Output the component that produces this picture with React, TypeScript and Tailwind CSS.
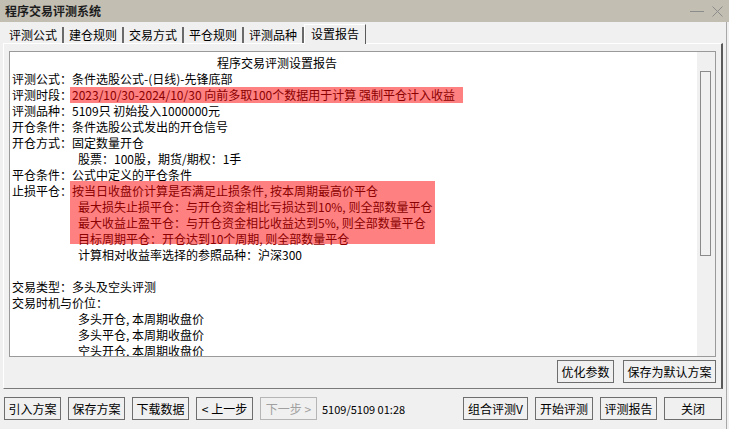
import React from "react";

const tabs = ["评测公式", "建仓规则", "交易方式", "平仓规则", "评测品种", "设置报告"];

const Btn = ({
  label,
  w,
  disabled = false,
}: {
  label: string;
  w: string;
  disabled?: boolean;
}) => (
  <div
    className={`flex h-[23px] items-center justify-center border bg-[#f0f0f0] text-[12px] ${w} ${
      disabled ? "border-[#b5b5b5] text-[#a0a0a0]" : "border-[#6e6e6e] text-black"
    }`}
  >
    {label}
  </div>
);

const Row = ({ children, indent }: { children: React.ReactNode; indent?: boolean }) => (
  <div className={`flex h-[16px] items-center whitespace-pre ${indent ? "pl-[66px]" : ""}`}>
    {children}
  </div>
);

export default function App() {
  return (
    <div className="h-[429px] w-[729px] overflow-hidden bg-[#f0f0f0] font-['Noto_Sans_CJK_SC','Liberation_Sans',sans-serif] text-[12px] leading-[16px] text-black">
      {/* title bar */}
      <div className="flex h-[22px] items-center justify-between bg-[#c2beb2] pl-[5px] pr-[6px]">
        <span className="text-[12px] font-bold text-[#1c1c1c]">程序交易评测系统</span>
        <div className="flex items-center gap-[8px]">
          <svg width="14" height="12" viewBox="0 0 14 12">
            <line x1="0" y1="6.5" x2="14" y2="6.5" stroke="#8c8c8c" strokeWidth="1" />
          </svg>
          <svg width="11" height="11" viewBox="0 0 11 11">
            <path d="M0.5 0.5 L10.5 10.5 M10.5 0.5 L0.5 10.5" stroke="#8c8c8c" strokeWidth="1" />
          </svg>
        </div>
      </div>

      <div className="h-[407px] w-[727px] border-r border-[#a8a8a8]">
        {/* tabs */}
        <div className="flex h-[21px] items-end pl-[4px]">
          {tabs.map((t, i) =>
            i === tabs.length - 1 ? (
              <div
                key={t}
                className="relative z-10 -mb-px flex h-[20px] items-center border-l border-t border-r border-l-white border-t-white border-r-[#5a5a5a] bg-[#f0f0f0] px-[6px] pb-[1px]"
              >
                {t}
              </div>
            ) : (
              <div
                key={t}
                className="flex h-[16px] items-center border-r-2 border-r-[#6a6a6a] px-[5px]"
              >
                {t}
              </div>
            )
          )}
        </div>

        {/* page */}
        <div className="ml-[3px] flex h-[346px] w-[720px] flex-col border-l border-t border-r-2 border-b border-l-white border-t-white border-r-[#5a5a5a] border-b-[#7a7a7a] pl-[5px] pr-[5px] pt-[7px]">
          <div className="flex h-[306px] border border-[#9a9a9a] bg-white">
            <div className="flex-1 overflow-hidden pl-[2px] pt-[3px]">
              <Row>
                <span className="pl-[205px]">程序交易评测设置报告</span>
              </Row>
              <Row>评测公式：条件选股公式-(日线)-先锋底部</Row>
              <Row>
                <span className="w-[58px]">评测时段：</span>
                <span className="bg-[#ff8080] pl-[2px] pr-[8px] text-[#8b0000]">
                  2023/10/30-2024/10/30 向前多取100个数据用于计算 强制平仓计入收益
                </span>
              </Row>
              <Row>评测品种：5109只 初始投入1000000元</Row>
              <Row>开仓条件：条件选股公式发出的开仓信号</Row>
              <Row>开仓方式：固定数量开仓</Row>
              <Row indent>股票：100股，期货/期权：1手</Row>
              <Row>平仓条件：公式中定义的平仓条件</Row>
              <div className="flex">
                <span className="h-[16px] w-[58px] whitespace-pre">止损平仓：</span>
                <div className="mt-[-2px] h-[63px] w-[365px] bg-[#ff8080] pl-[2px] pt-[2px] text-[#8b0000]">
                  <div className="h-[16px] whitespace-pre">按当日收盘价计算是否满足止损条件, 按本周期最高价平仓</div>
                  <div className="h-[16px] whitespace-pre pl-[6px]">最大损失止损平仓：与开仓资金相比亏损达到10%, 则全部数量平仓</div>
                  <div className="h-[16px] whitespace-pre pl-[6px]">最大收益止盈平仓：与开仓资金相比收益达到5%, 则全部数量平仓</div>
                  <div className="h-[16px] whitespace-pre pl-[6px]">目标周期平仓：开仓达到10个周期, 则全部数量平仓</div>
                </div>
              </div>
              <div className="mt-[3px]">
                <Row indent>计算相对收益率选择的参照品种：沪深300</Row>
              </div>
              <Row> </Row>
              <Row>交易类型：多头及空头评测</Row>
              <Row>交易时机与价位：</Row>
              <Row indent>多头开仓, 本周期收盘价</Row>
              <Row indent>多头平仓, 本周期收盘价</Row>
              <Row indent>空头开仓, 本周期收盘价</Row>
            </div>
            {/* scrollbar */}
            <div className="w-[18px] bg-[#f0f0f0] pl-[3px] pt-[19px]">
              <div className="h-[185px] w-[11px] border border-[#8a8a8a] bg-[#f0f0f0]" />
            </div>
          </div>
          <div className="mt-[3px] flex justify-end gap-[9px]">
            <div className="flex h-[23px] w-[57px] items-center justify-center border border-[#6e6e6e]">优化参数</div>
            <div className="flex h-[23px] w-[93px] items-center justify-center border border-[#6e6e6e]">保存为默认方案</div>
          </div>
        </div>

        {/* bottom bar */}
        <div className="mt-[8px] flex items-center pl-[4px] pr-[4px]">
          <div className="flex gap-[7px]">
            <Btn label="引入方案" w="w-[57px]" />
            <Btn label="保存方案" w="w-[57px]" />
            <Btn label="下载数据" w="w-[57px]" />
            <Btn label="< 上一步" w="w-[57px]" />
            <Btn label="下一步 >" w="w-[57px]" disabled />
          </div>
          <span className="ml-[5px] text-[11px]">5109/5109 01:28</span>
          <div className="ml-auto flex gap-[7px]">
            <Btn label="组合评测V" w="w-[65px]" />
            <Btn label="开始评测" w="w-[58px]" />
            <Btn label="评测报告" w="w-[57px]" />
            <Btn label="关闭" w="w-[58px]" />
          </div>
        </div>
      </div>
    </div>
  );
}
